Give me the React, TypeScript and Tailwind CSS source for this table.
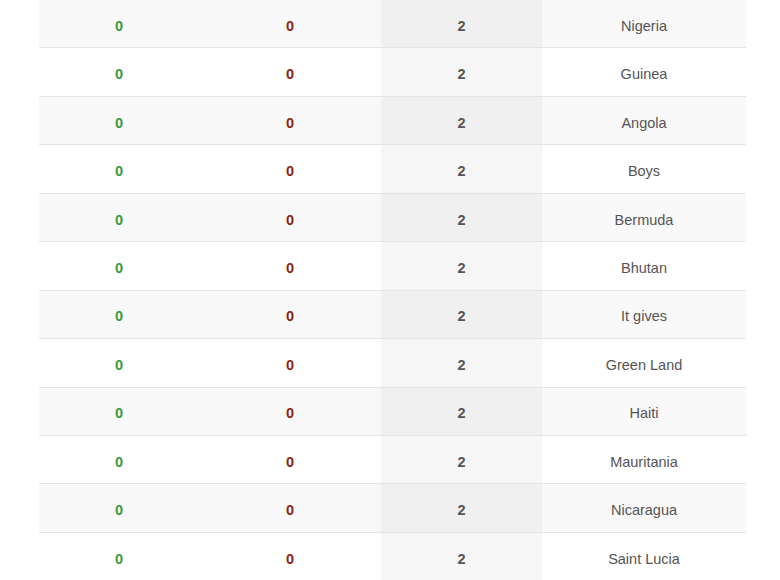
const rows = [
  'Nigeria',
  'Guinea',
  'Angola',
  'Boys',
  'Bermuda',
  'Bhutan',
  'It gives',
  'Green Land',
  'Haiti',
  'Mauritania',
  'Nicaragua',
  'Saint Lucia',
]

export default function App() {
  return (
    <div className="w-[780px] h-[580px] overflow-hidden bg-white font-['Liberation_Sans',Arial,sans-serif] text-[14.5px]">
      <div className="ml-[39px] w-[707px]">
        {rows.map((name, i) => (
          <div
            key={name}
            className={
              'flex h-[48.45px] border-b border-[#e4e4e4] ' +
              (i % 2 === 0 ? 'bg-[#f9f9f9]' : 'bg-white')
            }
          >
            <div className="w-[160px] flex items-center justify-center pt-[6px] font-bold text-[#3d9a3a]">0</div>
            <div className="w-[182px] flex items-center justify-center pt-[6px] font-bold text-[#8e1f16]">0</div>
            <div
              className={
                'w-[161px] flex items-center justify-center pt-[6px] font-bold text-[#555] ' +
                (i % 2 === 0 ? 'bg-[#f0f0f0]' : 'bg-[#f6f6f6]')
              }
            >
              2
            </div>
            <div className="flex-1 flex items-center justify-center pt-[6px] text-[#555]">{name}</div>
          </div>
        ))}
      </div>
    </div>
  )
}
